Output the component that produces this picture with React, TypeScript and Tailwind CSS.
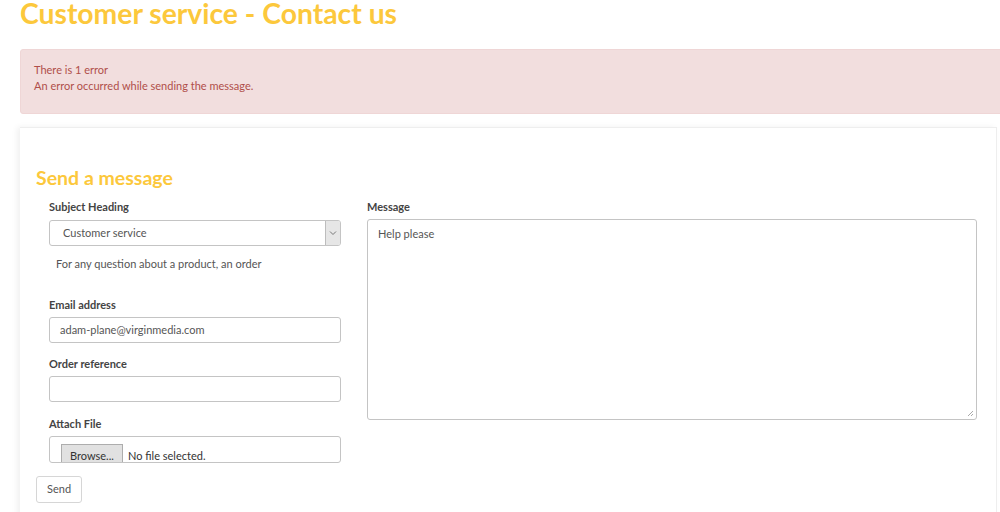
export default function App() {
  return (
    <div className="w-[1000px] h-[512px] overflow-hidden bg-white font-['Lato','Liberation_Sans',sans-serif]">
      <div className="h-[49px] pl-[20px]">
        <h1 className="text-[28.3px] leading-[26px] font-bold text-[#fcc83c] whitespace-nowrap">
          Customer service - Contact us
        </h1>
      </div>

      <div className="ml-[20px] w-[1000px] h-[65px] bg-[#f2dede] border border-[#efd6d6] rounded-[3px] pl-[13px] pt-[12px] text-[11px] leading-[16px] text-[#b04e4a]">
        <p>There is 1 error</p>
        <p>An error occurred while sending the message.</p>
      </div>

      <div className="ml-[20px] mt-[13px] w-[977px] h-[400px] bg-white border-t border-r border-[#eeeeee] shadow-[-3px_0_6px_rgba(0,0,0,0.06)] pt-[40px] pl-[16px]">
        <h3 className="text-[19.5px] leading-[20px] font-bold text-[#fcc83c]">Send a message</h3>

        <div className="flex mt-[11px]">
          <div className="w-[305px] pl-[13px] text-[11px] leading-[16px]">
            <label className="block font-bold text-[#444]">Subject Heading</label>
            <div className="mt-[5px] w-[292px] h-[26px] flex border border-[#c4c4c4] rounded-[3px] overflow-hidden">
              <div className="flex-1 flex items-center pl-[13px] text-[#555]">Customer service</div>
              <div className="w-[15px] bg-[#e6e6e6] border-l border-[#bdbdbd] flex items-center justify-center">
                <svg width="8" height="6" viewBox="0 0 8 6">
                  <path d="M1 1.5 L4 4.5 L7 1.5" fill="none" stroke="#777" strokeWidth="1" />
                </svg>
              </div>
            </div>
            <p className="mt-[10px] pl-[7px] text-[#555]">For any question about a product, an order</p>

            <label className="block mt-[25px] font-bold text-[#444]">Email address</label>
            <div className="mt-[4px] w-[292px] h-[26px] flex items-center border border-[#c4c4c4] rounded-[3px] pl-[10px] text-[#555]">
              adam-plane@virginmedia.com
            </div>

            <label className="block mt-[13px] font-bold text-[#444]">Order reference</label>
            <div className="mt-[4px] w-[292px] h-[26px] border border-[#c4c4c4] rounded-[3px]" />

            <label className="block mt-[14px] font-bold text-[#444]">Attach File</label>
            <div className="mt-[4px] w-[292px] h-[27px] border border-[#c4c4c4] rounded-[3px] overflow-hidden flex items-start pt-[7px] pl-[11px]">
              <div className="w-[62px] h-[26px] bg-[#e1e1e1] border border-[#adadad] pl-[8px] pt-[3px] text-[#333]">Browse...</div>
              <span className="ml-[5px] pt-[4px] text-[#333]">No file selected.</span>
            </div>
          </div>

          <div className="ml-[26px] text-[11px] leading-[16px]">
            <label className="block font-bold text-[#444]">Message</label>
            <div className="relative mt-[4px] w-[610px] h-[201px] border border-[#c4c4c4] rounded-[3px] pl-[10px] pt-[6px] text-[#555]">
              Help please
              <svg className="absolute right-[2px] bottom-[2px]" width="7" height="7" viewBox="0 0 7 7">
                <path d="M6 1 L1 6 M6 4 L4 6" stroke="#aaa" strokeWidth="1" />
              </svg>
            </div>
          </div>
        </div>

        <button className="mt-[13px] w-[46px] h-[27px] border border-[#d6d6d6] rounded-[3px] bg-white text-[11px] text-[#555] text-left pl-[10px]">
          Send
        </button>
      </div>
    </div>
  );
}
